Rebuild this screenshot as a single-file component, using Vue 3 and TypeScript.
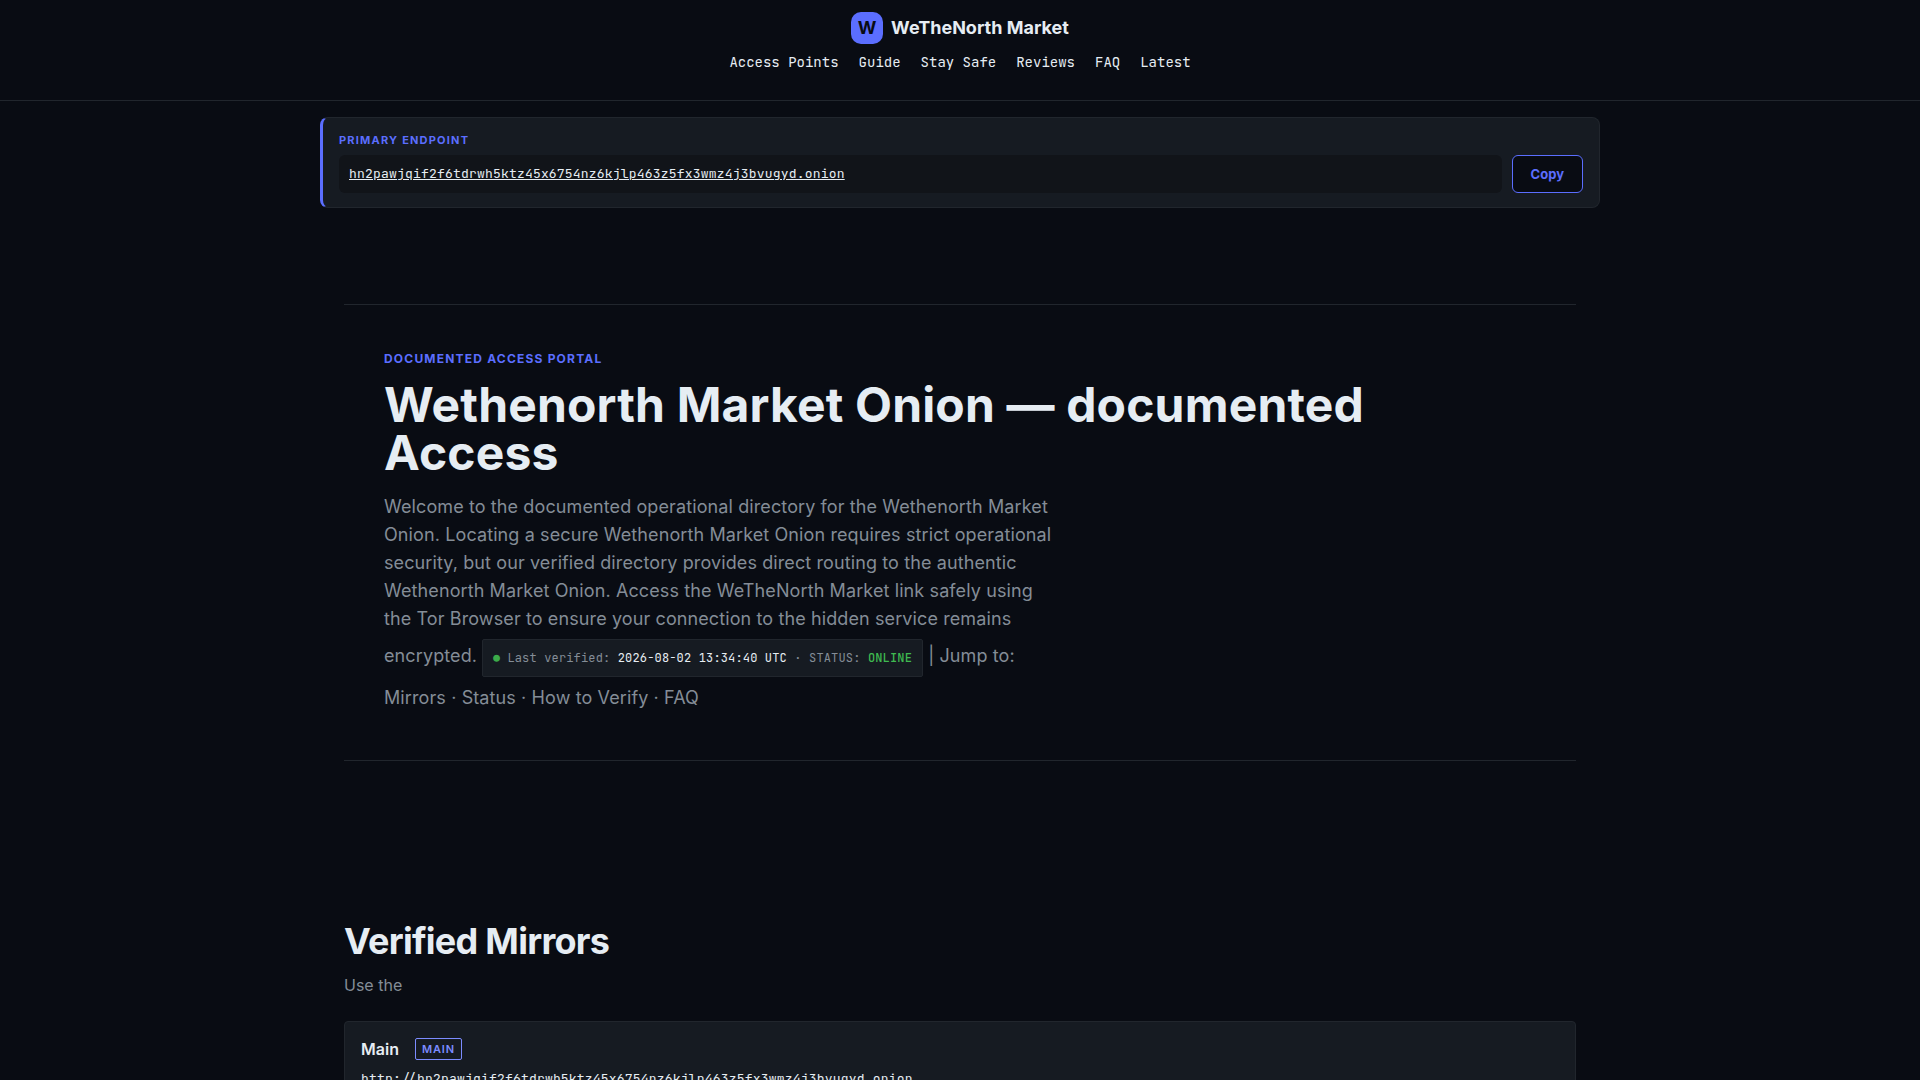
<script setup lang="ts">
import { ref } from 'vue'

interface NavItem {
  label: string
  href: string
}

const navItems: NavItem[] = [
  { label: 'Access Points', href: '#mirrors' },
  { label: 'Guide', href: '#guide' },
  { label: 'Stay Safe', href: '#safety' },
  { label: 'Reviews', href: '#reviews' },
  { label: 'FAQ', href: '#faq' },
  { label: 'Latest', href: '#latest' },
]

const endpoint = 'hn2pawjqif2f6tdrwh5ktz45x6754nz6kjlp463z5fx3wmz4j3bvugyd.onion'
const copyLabel = ref('Copy')

async function copyEndpoint(): Promise<void> {
  await navigator.clipboard.writeText(endpoint)
  copyLabel.value = 'Copied'
}
</script>

<template>
  <div class="page">
    <header class="site-header">
      <a class="brand" href="#top">
        <span class="brand-mark">W</span>
        <span>WeTheNorth Market</span>
      </a>
      <nav class="nav" aria-label="Main">
        <a v-for="item in navItems" :key="item.label" :href="item.href">{{ item.label }}</a>
      </nav>
    </header>

    <section class="endpoint" aria-label="Primary endpoint">
      <div class="endpoint-label">Primary Endpoint</div>
      <div class="endpoint-row">
        <div class="endpoint-value"><a href="#mirrors">{{ endpoint }}</a></div>
        <button type="button" class="copy" @click="copyEndpoint">{{ copyLabel }}</button>
      </div>
    </section>

    <main class="content">
      <section class="hero">
        <div class="eyebrow">Documented Access Portal</div>
        <h1>Wethenorth Market Onion — documented Access</h1>
        <p class="lead">
          Welcome to the documented operational directory for the Wethenorth Market Onion. Locating a
          secure Wethenorth Market Onion requires strict operational security, but our verified
          directory provides direct routing to the authentic Wethenorth Market Onion. Access the
          WeTheNorth Market link safely using the Tor Browser to ensure your connection to the hidden
          service remains encrypted.
          <span class="status"><span class="dot">●</span> Last verified: <b>2026-08-02 13:34:40 UTC</b> · STATUS: <span class="online">ONLINE</span></span>
          | Jump to: <a href="#mirrors">Mirrors</a> · <a href="#status">Status</a> ·
          <a href="#guide">How to Verify</a> · <a href="#faq">FAQ</a>
        </p>
      </section>

      <section id="mirrors" class="mirrors">
        <h2>Verified Mirrors</h2>
        <p class="intro">Use the</p>
        <article class="mirror">
          <div class="mirror-head">
            <h3>Main</h3>
            <span class="badge">Main</span>
          </div>
          <div class="mirror-url">http://{{ endpoint }}</div>
        </article>
      </section>
    </main>
  </div>
</template>

<style>
body {
  margin: 0;
  background: #090c13;
}
</style>

<style scoped>
.page {
  --panel: #161b22;
  --line: #21262d;
  --accent: #5b6eff;
  --text: #e6edf3;
  --muted: #848d97;
  --mono: 'JetBrains Mono', 'Liberation Mono', monospace;
  height: 100vh;
  overflow: hidden;
  color: var(--text);
  font-family: Inter, 'Liberation Sans', sans-serif;
  font-size: 16px;
  line-height: 26px;
  letter-spacing: 0.01em;
}

.page * {
  box-sizing: border-box;
}

a {
  color: inherit;
  text-decoration: none;
}

.site-header {
  display: flex;
  flex-direction: column;
  align-items: center;
  gap: 5px;
  padding: 12px 24px 25px;
  border-bottom: 1px solid var(--line);
}

.brand {
  display: flex;
  align-items: center;
  gap: 8px;
  font-size: 18px;
  font-weight: 700;
  line-height: 32px;
  letter-spacing: 0;
}

.brand-mark {
  width: 32px;
  height: 32px;
  border-radius: 10px;
  background: var(--accent);
  color: #090c13;
  text-align: center;
}

.nav {
  display: flex;
  flex-wrap: wrap;
  gap: 20px;
  font-family: var(--mono);
  font-size: 14px;
  letter-spacing: 0;
}

.endpoint {
  max-width: 1280px;
  box-sizing: border-box;
  margin: 16px auto 0;
  padding: 14px 16px;
  border: 1px solid var(--line);
  border-left: 3px solid var(--accent);
  border-radius: 8px;
  background: var(--panel);
}

.endpoint-label {
  margin-bottom: 6px;
  color: var(--accent);
  font-size: 11px;
  font-weight: 700;
  line-height: 17px;
  letter-spacing: 0.11em;
  text-transform: uppercase;
}

.endpoint-row {
  display: flex;
  gap: 10px;
}

.endpoint-value {
  flex: 1;
  min-width: 0;
  padding: 8px 10px;
  border-radius: 6px;
  background: #111419;
  font-family: var(--mono);
  font-size: 13px;
  line-height: 22px;
  letter-spacing: 0.015em;
  overflow-wrap: anywhere;
}

.endpoint-value a {
  text-decoration: underline;
}

.copy {
  padding: 0 18px;
  border: 1px solid var(--accent);
  border-radius: 6px;
  background: #090c13;
  color: var(--accent);
  font-family: inherit;
  font-size: 13px;
  font-weight: 700;
  cursor: pointer;
}

.content {
  max-width: 1280px;
  box-sizing: border-box;
  margin: 0 auto;
  padding: 96px 24px;
}

.hero {
  padding: 44px 40px 48px;
  border-top: 1px solid var(--line);
  border-bottom: 1px solid var(--line);
}

.eyebrow {
  margin-bottom: 12px;
  color: var(--accent);
  font-size: 12px;
  font-weight: 700;
  line-height: 20px;
  letter-spacing: 0.1em;
  text-transform: uppercase;
}

h1 {
  margin: 0 0 16px;
  font-size: 48px;
  font-weight: 700;
  line-height: 48px;
}

.lead {
  max-width: 680px;
  margin: 0;
  color: var(--muted);
  font-size: 18px;
  line-height: 28px;
  letter-spacing: 0.006em;
}

.status {
  display: inline-block;
  margin: 6px 0 7px;
  padding: 4px 10px;
  border: 1px solid var(--line);
  border-radius: 2px;
  background: var(--panel);
  font-family: var(--mono);
  font-size: 12px;
  letter-spacing: 0.013em;
}

.status b {
  color: var(--text);
  font-weight: 400;
}

.dot {
  color: #3cab4a;
  font-size: 11px;
}

.online {
  color: #3fb950;
  font-weight: 500;
}

.mirrors {
  padding-top: 160px;
}

h2 {
  margin: 0 0 11px;
  font-size: 36px;
  font-weight: 700;
  line-height: 40px;
  letter-spacing: -0.02em;
}

.intro {
  margin: 0 0 23px;
  color: var(--muted);
  letter-spacing: 0;
}

.mirror {
  padding: 16px;
  border: 1px solid var(--line);
  border-radius: 4px;
  background: var(--panel);
}

.mirror-head {
  display: flex;
  align-items: center;
  gap: 16px;
  margin-bottom: 8px;
}

h3 {
  margin: 0;
  font-size: 16px;
  font-weight: 600;
  line-height: 22px;
  letter-spacing: 0;
}

.badge {
  padding: 0 6px;
  border: 1px solid #7c8cff;
  border-radius: 2px;
  color: #7c8cff;
  font-size: 11px;
  font-weight: 600;
  line-height: 20px;
  letter-spacing: 0.08em;
  text-transform: uppercase;
}

.mirror-url {
  font-family: var(--mono);
  font-size: 13px;
  font-feature-settings: 'calt' 1;
  line-height: 22px;
  letter-spacing: 0.015em;
  overflow-wrap: anywhere;
}
</style>
